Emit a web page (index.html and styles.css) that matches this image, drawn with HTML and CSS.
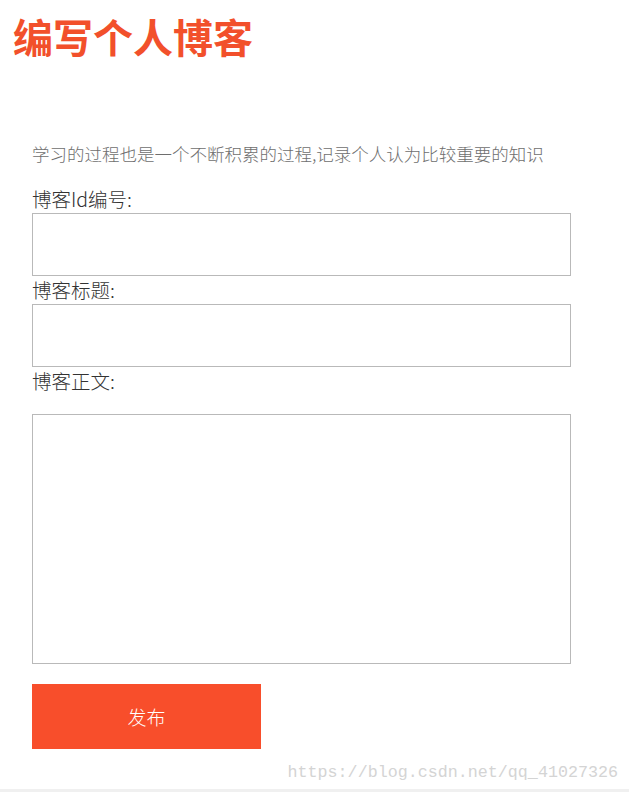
FILE: index.html
```html
<!DOCTYPE html>
<html lang="zh-CN">
<head>
    <meta charset="UTF-8">
    <meta name="viewport" content="width=device-width, initial-scale=1.0">
    <title>编写个人博客</title>
    <link rel="stylesheet" href="styles.css">
</head>
<body>
    <h1 class="title">编写个人博客</h1>
    <div class="container">
        <p class="intro">学习的过程也是一个不断积累的过程,记录个人认为比较重要的知识</p>
        <form id="blogForm">
            <label for="blogId">博客Id编号:</label>
            <input type="text" id="blogId">
            <label for="blogTitle">博客标题:</label>
            <input type="text" id="blogTitle">
            <label for="blogContent">博客正文:</label>
            <textarea id="blogContent"></textarea>
            <button type="submit">发布</button>
        </form>
    </div>
    <div class="watermark">https://blog.csdn.net/qq_41027326</div>
    <div class="bottom-bar"></div>
</body>
</html>
```
FILE: styles.css
```css
body {
    margin: 0;
    font-family: "Noto Sans CJK SC", "Noto Sans", sans-serif;
    background: #fff;
    height: 792px;
    position: relative;
    overflow: hidden;
}
.title {
    margin: 0;
    padding: 10px 0 0 13px;
    font-size: 40px;
    line-height: 52px;
    font-weight: bold;
    color: #f2502b;
}
.container {
    padding: 0 32px;
    width: 539px;
}
.intro {
    margin: 80px 0 0;
    font-size: 17.5px;
    font-weight: 300;
    line-height: 24px;
    color: #6e6e6e;
}
form {
    margin-top: 19px;
}
label {
    display: block;
    font-size: 19.5px;
    font-weight: 300;
    line-height: 28px;
    color: #333;
}
input[type="text"],
textarea {
    display: block;
    width: 100%;
    height: 63px;
    margin: 0;
    border: 1px solid #b9b9b9;
    box-sizing: border-box;
    font-size: 16px;
    padding: 6px;
}
textarea {
    height: 250px;
    margin-top: 19px;
    resize: none;
}
button {
    display: block;
    width: 229px;
    height: 65px;
    margin-top: 20px;
    background-color: #f84e2b;
    color: #fff;
    border: none;
    font-family: inherit;
    font-size: 19px;
    font-weight: 300;
    line-height: 60px;
    cursor: pointer;
}
.watermark {
    position: absolute;
    right: 11px;
    bottom: 10px;
    font-family: "Liberation Mono", monospace;
    font-size: 16.7px;
    color: #d4d4d4;
}
.bottom-bar {
    position: absolute;
    left: 0;
    right: 0;
    bottom: 0;
    height: 3px;
    background: #f0f0f0;
}
```
